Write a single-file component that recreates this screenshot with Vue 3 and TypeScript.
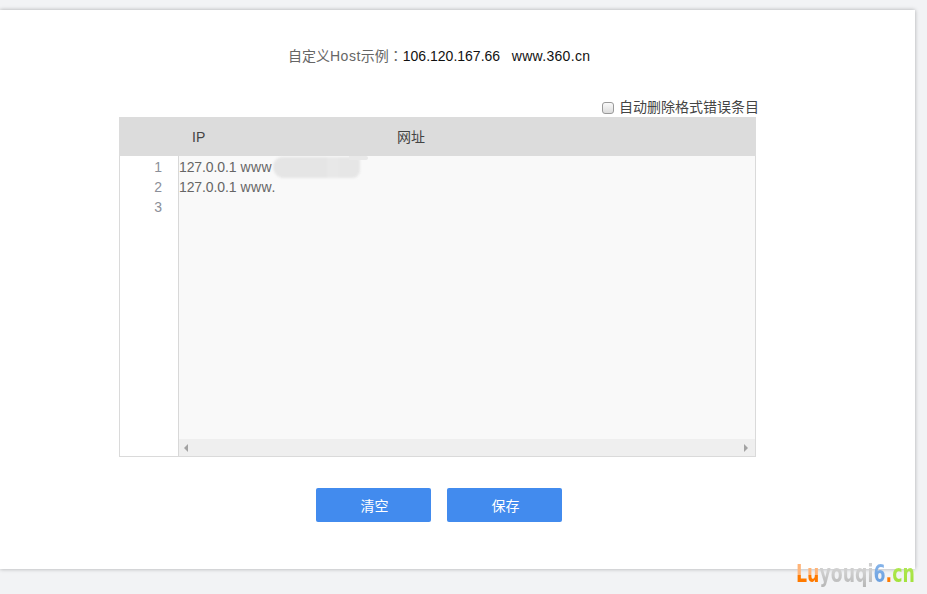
<script setup lang="ts">
interface HostLine {
  ip: string
  host: string
}
const lines: HostLine[] = [
  { ip: '127.0.0.1', host: 'www' },
  { ip: '127.0.0.1', host: 'www.' },
  { ip: '', host: '' },
]
</script>

<template>
  <div class="page">
    <main class="panel">
      <p class="hint">
        <span class="hint-label">自定义<span class="host">Host</span>示例<span class="colon">：</span></span><span class="hint-sample">106.120.167.66&nbsp;&nbsp;&nbsp;<span class="domain">www.360.cn</span></span>
      </p>
      <div class="editor-wrap">
        <label class="auto-delete">
          <span class="check"></span>
          <span>自动删除格式错误条目</span>
        </label>
        <div class="editor">
          <div class="editor-head">
            <span class="col-ip">IP</span>
            <span class="col-url">网址</span>
          </div>
          <div class="editor-body">
            <div class="gutter">
              <div v-for="(_, i) in lines" :key="i" class="num">{{ i + 1 }}</div>
            </div>
            <div class="code">
              <div class="code-lines">
                <div v-for="(line, i) in lines" :key="i" class="line"><span class="ip">{{ line.ip }}</span> <span class="url">{{ line.host }}</span></div>
                <div class="smudge"></div>
                <div class="smudge-tail"></div>
              </div>
              <div class="scrollbar">
                <span class="arrow arrow-left"></span>
                <span class="arrow arrow-right"></span>
              </div>
            </div>
          </div>
        </div>
      </div>
      <div class="actions">
        <button class="btn" type="button">清空</button>
        <button class="btn" type="button">保存</button>
      </div>
    </main>
    <div class="watermark"><span class="wm-orange">Lu</span><span class="wm-gray">youqi</span><span class="wm-blue">6</span><span class="wm-dot">.</span><span class="wm-green">cn</span></div>
  </div>
</template>

<style>
html,
body {
  margin: 0;
  background: #f2f3f5;
}
</style>

<style scoped>
.page {
  position: relative;
  height: 594px;
  overflow: hidden;
  padding-top: 10px;
  box-sizing: border-box;
  background: #f2f3f5;
  font-family: "Liberation Sans", "Noto Sans CJK SC", sans-serif;
  font-size: 14px;
}
.panel {
  width: 915px;
  height: 559px;
  background: #fff;
  box-shadow: 0 0 4px rgba(0, 0, 0, 0.3);
  overflow: hidden;
}
.hint {
  margin: 36px 0 0;
  height: 20px;
  line-height: 20px;
  padding-left: 288px;
  white-space: nowrap;
}
.hint-label {
  color: #666;
}
.host {
  letter-spacing: 0.5px;
}
.colon {
  font-family: "Noto Sans CJK TC", sans-serif;
  line-height: 0;
}
.hint-sample {
  color: #111;
}
.domain {
  letter-spacing: 0.3px;
}
.editor-wrap {
  width: 637px;
  margin: 32px 0 0 119px;
}
.auto-delete {
  display: flex;
  align-items: center;
  justify-content: flex-end;
  gap: 5px;
  height: 19px;
  margin-right: -3px;
  line-height: 19px;
  color: #444;
  white-space: nowrap;
}
.check {
  width: 10px;
  height: 10px;
  border: 1px solid #9a9a9a;
  border-radius: 3px;
  background: linear-gradient(#fafafa, #dcdcdc);
}
.editor {
  box-sizing: border-box;
  height: 340px;
  display: flex;
  flex-direction: column;
  border: 1px solid #dadada;
  border-top: 0;
}
.editor-head {
  display: flex;
  flex: none;
  height: 39px;
  margin: 0 -1px;
  line-height: 41px;
  background: #dcdcdc;
  color: #444;
}
.col-ip {
  width: 205px;
  padding-left: 73px;
  box-sizing: border-box;
}
.col-url {
  margin-left: 73px;
}
.editor-body {
  flex: 1;
  display: flex;
  min-height: 0;
}
.gutter {
  flex: none;
  box-sizing: border-box;
  width: 59px;
  padding: 1px 16px 0 0;
  border-right: 1px solid #d8d8d8;
  text-align: right;
  color: #8b8f99;
}
.num,
.line {
  height: 20px;
  line-height: 20px;
}
.line {
  white-space: pre;
}
.ip {
  letter-spacing: -0.1px;
}
.url {
  letter-spacing: 0.5px;
}
.code {
  flex: 1;
  display: flex;
  flex-direction: column;
  min-width: 0;
  background: #f9f9f9;
}
.code-lines {
  position: relative;
  flex: 1;
  padding-top: 1px;
  color: #666;
}
.smudge {
  position: absolute;
  left: 94px;
  top: 1px;
  width: 87px;
  height: 21px;
  border-radius: 10px 4px 8px 12px;
  background: linear-gradient(90deg, #e5e5e5 0 62%, #e8e8e8 62% 76%, #e6e6e6 76%);
  filter: blur(1px);
}
.smudge-tail {
  position: absolute;
  left: 170px;
  top: 0;
  width: 19px;
  height: 4px;
  border-radius: 0 6px 6px 0;
  background: #e9e9e9;
  filter: blur(0.6px);
}
.scrollbar {
  position: relative;
  flex: none;
  height: 17px;
  background: #efefef;
}
.arrow {
  position: absolute;
  top: 5px;
  width: 0;
  height: 0;
  border-top: 4px solid transparent;
  border-bottom: 4px solid transparent;
}
.arrow-left {
  left: 5px;
  border-right: 4px solid #a3a3a3;
}
.arrow-right {
  right: 7px;
  border-left: 4px solid #a3a3a3;
}
.actions {
  display: flex;
  gap: 16px;
  margin: 31px 0 0 316px;
}
.btn {
  width: 115px;
  height: 34px;
  padding: 0 0 0 2px;
  border: 0;
  border-radius: 2px;
  background: #428bee;
  color: #fff;
  font: inherit;
  cursor: pointer;
}
.watermark {
  position: absolute;
  left: 796px;
  top: 558px;
  line-height: 32px;
  font-size: 25px;
  font-weight: 700;
  white-space: nowrap;
  font-family: "DejaVu Sans", sans-serif;
  transform: scaleX(0.695);
  transform-origin: left center;
}
.watermark span {
  -webkit-background-clip: text;
  background-clip: text;
  color: transparent;
}
.wm-orange {
  background-image: linear-gradient(#ffb478 0 56%, #ff7a00 56%);
}
.wm-gray {
  background-image: linear-gradient(#cfcfcf 0 45%, #b4b4b4 100%);
}
.wm-blue {
  background-image: linear-gradient(#8db9ec, #6199dc);
}
.wm-dot {
  background-image: linear-gradient(#ff7a00, #ff7a00);
}
.wm-green {
  background-image: linear-gradient(#b4ea5c, #9fe033);
}
</style>
